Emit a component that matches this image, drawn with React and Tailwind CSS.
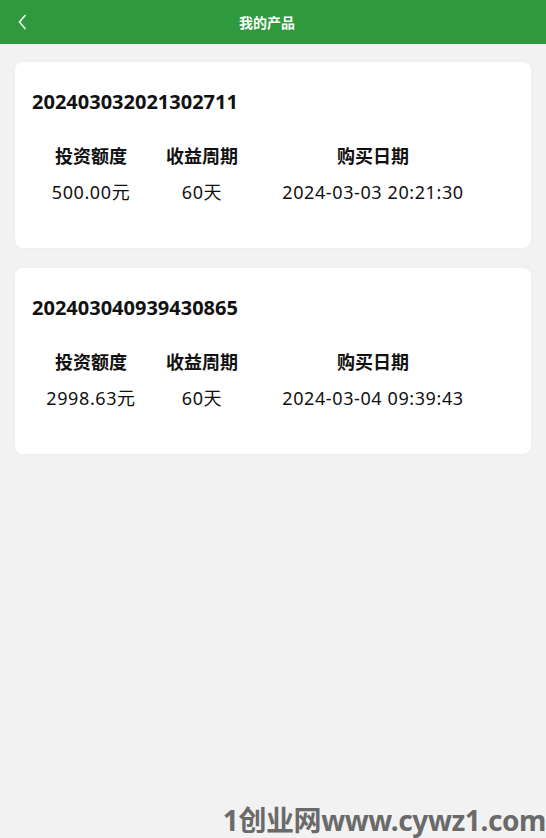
import React from 'react';

const orders = [
  { no: '202403032021302711', amount: '500.00元', period: '60天', date: '2024-03-03 20:21:30' },
  { no: '202403040939430865', amount: '2998.63元', period: '60天', date: '2024-03-04 09:39:43' },
];

const font = { fontFamily: '"Noto Sans", "Noto Sans CJK SC", sans-serif' };

function OrderCard({ order }) {
  return (
    <div className="bg-white rounded-[8px] h-[186px] pt-[26px] px-[17px] shadow-[0_0_4px_rgba(0,0,0,0.03)]">
      <div className="text-[20px] leading-[28px] font-bold text-[#111]">{order.no}</div>
      <div className="mt-[27px] grid grid-cols-[118px_104px_238px] text-[#111] text-center">
        <div className="text-[18px] leading-[26px] font-bold">投资额度</div>
        <div className="text-[18px] leading-[26px] font-bold">收益周期</div>
        <div className="text-[18px] leading-[26px] font-bold">购买日期</div>
        <div className="mt-[10px] text-[18px] leading-[26px] tracking-[0.6px]">{order.amount}</div>
        <div className="mt-[10px] text-[18px] leading-[26px] tracking-[0.6px]">{order.period}</div>
        <div className="mt-[10px] text-[18px] leading-[26px] tracking-[0.6px]">{order.date}</div>
      </div>
    </div>
  );
}

export default function App() {
  return (
    <div className="relative min-h-[838px] bg-[#f2f2f2] overflow-hidden" style={font}>
      <div className="h-[44px] bg-[#2f993d] flex items-center relative">
        <button className="absolute left-[15px] top-[14px] w-[14px] h-[16px] flex items-center justify-center">
          <svg width="10" height="16" viewBox="0 0 10 16" fill="none">
            <path d="M8 1.5 L2.5 8 L8 14.5" stroke="#dff5df" strokeWidth="1.8" strokeLinecap="round" strokeLinejoin="round" />
          </svg>
        </button>
        <div className="flex-1 text-center pr-[12px] text-white text-[14px] font-bold">我的产品</div>
      </div>

      <div className="px-[15px] pt-[18px] flex flex-col gap-[20px]">
        {orders.map((o) => (
          <OrderCard key={o.no} order={o} />
        ))}
      </div>

      <div className="absolute right-[0px] bottom-[1px] text-[28px] leading-[34px] font-bold text-[#6a6a6a] tracking-[-0.4px]">
        1创业网www.cywz1.com
      </div>
    </div>
  );
}
